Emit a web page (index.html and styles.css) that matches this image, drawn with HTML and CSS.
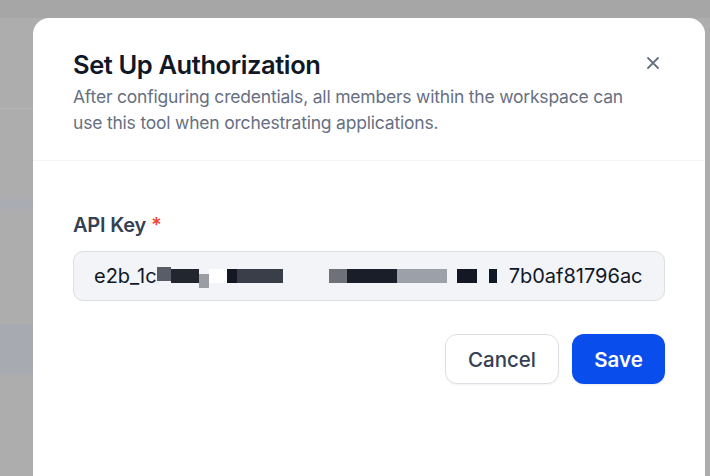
FILE: index.html
```html
<!DOCTYPE html>
<html lang="en">
<head>
<meta charset="utf-8">
<title>Set Up Authorization</title>
<link rel="stylesheet" href="styles.css">
</head>
<body>
<div class="app">
  <div class="topbar"></div>
  <div class="side">
    <div class="row r1"></div>
    <div class="row r2"></div>
    <div class="row r3"></div>
    <div class="row r4"></div>
    <div class="row r5"></div>
  </div>
</div>
<div class="modal">
  <div class="header">
    <div class="titles">
      <h1 class="title">Set Up Authorization</h1>
      <p class="desc">After configuring credentials, all members within the workspace can use this tool when orchestrating applications.</p>
    </div>
    <button class="close" aria-label="Close">
      <svg width="16" height="16" viewBox="0 0 16 16" fill="none" stroke="#676f83" stroke-width="1.8" stroke-linecap="round"><path d="M3 3l10 10M13 3L3 13"/></svg>
    </button>
  </div>
  <div class="body">
    <label class="label">API Key <span class="req">*</span></label>
    <div class="input"><span>e2b_1c</span><span class="blk b1"></span><span class="blk b2"></span><span class="blk b3"></span><span class="blk b4"></span><span class="blk b5"></span><span class="blk b6"></span><span class="blk b7"></span><span class="blk b8"></span><span class="blk b9"></span><span class="blk b10"></span><span class="blk b11"></span><span class="blk b12"></span><span>7b0af81796ac</span></div>
    <div class="actions">
      <button class="btn cancel">Cancel</button>
      <button class="btn save">Save</button>
    </div>
  </div>
</div>
</body>
</html>
```
FILE: styles.css
```css
* { box-sizing: border-box; }
html, body { margin: 0; padding: 0; }
body {
  width: 710px;
  height: 476px;
  overflow: hidden;
  background: #adadad;
  font-family: Inter, "Noto Sans", sans-serif;
  position: relative;
}
.app { display: flex; flex-direction: column; height: 100%; }
.topbar { height: 18px; background: #a6a6a6; flex: none; }
.side { width: 33px; display: flex; flex-direction: column; }
.row { flex: none; }
.r1 { height: 91px; border-bottom: 1px solid #b6b6b6; }
.r2 { height: 90px; }
.r3 { height: 10px; background: #a9acb2; }
.r4 { height: 115px; }
.r5 { height: 50px; background: #a7aab0; }

.modal {
  position: absolute;
  left: 33px;
  top: 18px;
  width: 672px;
  height: 480px;
  background: #fff;
  border-radius: 16px 16px 0 0;
}
.header {
  display: flex;
  justify-content: space-between;
  align-items: flex-start;
  padding: 31px 40px 24px 40px;
  border-bottom: 1px solid #f2f4f7;
}
.title {
  margin: 0;
  font-size: 25.5px;
  line-height: 32px;
  font-weight: 600;
  color: #101828;
  letter-spacing: -0.4px;
}
.desc {
  margin: 3px 0 0;
  font-size: 17.5px;
  line-height: 26px;
  color: #676f83;
  width: 560px;
  letter-spacing: -0.2px;
}
.close {
  border: 0;
  background: none;
  padding: 0;
  margin-top: 6px;
  margin-right: 4px;
  width: 16px;
  height: 16px;
  display: flex;
}
.body {
  padding: 50px 40px 0 40px;
  display: flex;
  flex-direction: column;
}
.label {
  font-size: 20px;
  line-height: 28px;
  font-weight: 600;
  color: #354052;
  letter-spacing: -0.2px;
}
.req { color: #f04438; }
.input {
  margin-top: 12px;
  height: 50px;
  background: #f2f4f7;
  border: 1px solid #dcdfe4;
  border-radius: 10px;
  display: flex;
  align-items: center;
  padding: 0 20px;
  font-size: 20px;
  color: #101828;
  white-space: nowrap;
}
.blk { display: inline-block; height: 14px; flex: none; }
.b1 { width: 14px; background: #595d68; margin-top: -4px; }
.b2 { width: 28px; background: #22262f; }
.b3 { width: 10px; background: #9a9da4; margin-top: 10px; }
.b4 { width: 18px; background: #fff; }
.b5 { width: 10px; background: #141824; }
.b6 { width: 46px; background: #3a3e48; }
.b7 { width: 46px; background: #f2f4f7; }
.b8 { width: 18px; background: #6e717a; }
.b9 { width: 50px; background: #1a1e28; }
.b10 { width: 50px; background: #9ca0a8; }
.b11 { width: 20px; background: #141824; margin-left: 10px; }
.b12 { width: 8px; background: #101828; margin-left: 12px; margin-right: 12px; }
.actions {
  margin-top: 33px;
  display: flex;
  justify-content: flex-end;
  gap: 13px;
}
.btn {
  height: 50px;
  border-radius: 12px;
  font-family: Inter, "Noto Sans", sans-serif;
  font-size: 20.5px;
  font-weight: 500;
  padding: 0;
  cursor: pointer;
}
.cancel {
  width: 114px;
  background: #fff;
  border: 1px solid #dcdfe4;
  color: #354052;
  box-shadow: 0 1px 2px rgba(16,24,40,0.05);
}
.save {
  width: 93px;
  background: #0a4ded;
  border: 0;
  color: #fff;
  font-weight: 600;
  box-shadow: 0 1px 2px rgba(16,24,40,0.08);
}
```
